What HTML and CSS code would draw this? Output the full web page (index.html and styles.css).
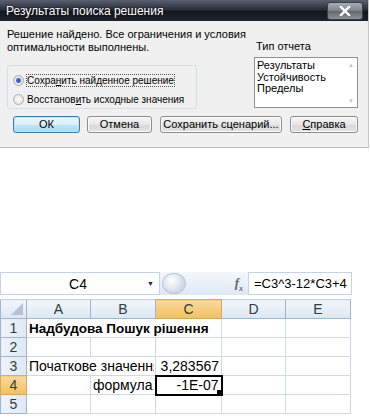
FILE: index.html
```html
<!DOCTYPE html>
<html lang="ru">

<head>
    <meta charset="UTF-8">
    <title>Результаты поиска решения</title>
    <link rel="stylesheet" href="styles.css">
</head>

<body>
    <div class="dialog">
        <div class="titlebar">
            <span class="title">Результаты поиска решения</span>
            <div class="close">
                <svg width="12" height="10" viewBox="0 0 12 10">
                    <path d="M2 1 L10 9 M10 1 L2 9" stroke="#fff" stroke-width="2.4" stroke-linecap="square" />
                </svg>
            </div>
        </div>
        <div class="dlg-body">
            <div class="top">
                <div class="left">
                    <p class="msg">Решение найдено. Все ограничения и условия оптимальности выполнены.</p>
                    <div class="group">
                        <label class="radio"><span class="dot on"></span><span class="focus">Сохра<u>н</u>ить найденное решение</span></label>
                        <label class="radio"><span class="dot"></span><span>Восстанов<u>и</u>ть исходные значения</span></label>
                    </div>
                </div>
                <div class="right">
                    <div class="lbl">Тип отчета</div>
                    <div class="listbox">
                        <div class="items">
                            <div>Результаты</div>
                            <div>Устойчивость</div>
                            <div>Пределы</div>
                        </div>
                        <div class="scroll">
                            <span class="arr">&#9650;</span>
                            <span class="arr">&#9660;</span>
                        </div>
                    </div>
                </div>
            </div>
            <div class="buttons">
                <div class="btn default ok">ОК</div>
                <div class="btn cancel">Отмена</div>
                <div class="btn save">Сохранить сценарий...</div>
                <div class="btn help"><u>С</u>правка</div>
            </div>
        </div>
    </div>

    <div class="excel">
        <div class="fbar">
            <div class="namebox">
                <span class="name">C4</span>
                <span class="drop">&#9660;</span>
            </div>
            <div class="mid">
                <span class="knob"></span>
                <span class="fx">f<sub>x</sub></span>
            </div>
            <div class="formula">=C3^3-12*C3+4</div>
        </div>
        <table class="sheet">
            <tr class="hdr">
                <th class="corner"><span class="tri"></span></th>
                <th>A</th>
                <th>B</th>
                <th class="sel">C</th>
                <th>D</th>
                <th>E</th>
            </tr>
            <tr>
                <th>1</th>
                <td class="bold" colspan="3">Надбудова Пошук рішення</td>
                <td></td>
                <td></td>
            </tr>
            <tr>
                <th>2</th>
                <td></td><td></td><td></td><td></td><td></td>
            </tr>
            <tr>
                <th>3</th>
                <td colspan="2"><div class="clip">Початкове значення</div></td>
                <td class="num">3,283567</td>
                <td></td>
                <td></td>
            </tr>
            <tr>
                <th class="sel">4</th>
                <td></td>
                <td class="num">формула</td>
                <td class="num active">-1E-07<span class="handle"></span></td>
                <td></td>
                <td></td>
            </tr>
            <tr>
                <th>5</th>
                <td></td><td></td><td></td><td></td><td></td>
            </tr>
        </table>
    </div>
</body>

</html>
```

FILE: styles.css
```css
body {
    margin: 0;
    background: #fff;
    font-family: "Liberation Sans", Arial, sans-serif;
}

/* диалог */
.dialog {
    width: 368px;
    height: 147px;
    background: #f0f0f0;
    border-bottom: 1px solid #b8b8b8;
    border-right: 1px solid #c8c8c8;
}

.titlebar {
    height: 21px;
    display: flex;
    align-items: center;
    justify-content: space-between;
    background: linear-gradient(#5a6070, #2a2f3c 45%, #14171f 55%, #1e222c);
}

.title {
    color: #fff;
    font-size: 12px;
    padding-left: 6px;
    text-shadow: 0 0 2px #000;
}

.close {
    width: 34px;
    height: 16px;
    margin-right: 5px;
    display: flex;
    align-items: center;
    justify-content: center;
    border: 1px solid #3a3e48;
    border-radius: 3px;
    background: linear-gradient(#a8acb4, #7c818c 50%, #62666f 51%, #8a8f98);
}

.dlg-body {
    padding: 6px 10px 0 7px;
    font-size: 11px;
    color: #000;
}

.top {
    display: flex;
    justify-content: space-between;
}

.left {
    width: 244px;
}

.msg {
    margin: 0;
    line-height: 13px;
    padding-top: 1px;
}

.group {
    margin-top: 11px;
    width: 190px;
    height: 44px;
    border: 1px solid #d5dfe5;
    border-radius: 3px;
    padding: 5px 0 0 5px;
    box-sizing: border-box;
}

.radio {
    display: flex;
    align-items: center;
    height: 19px;
    font-size: 10px;
    white-space: nowrap;
}

.dot {
    width: 11px;
    height: 11px;
    border-radius: 50%;
    border: 1px solid #a8b0b8;
    background: radial-gradient(#fff, #dcdcdc);
    box-sizing: border-box;
    margin-right: 3px;
    flex: none;
}

.dot.on {
    background: radial-gradient(circle, #3b57c0 0, #4866d2 2px, #e8eaf6 3px, #d8dce6 5px);
}

.focus {
    outline: 1px dotted #555;
    outline-offset: 0;
}

.right {
    width: 104px;
    padding-top: 13px;
}

.lbl {
    height: 14px;
    padding-left: 2px;
}

.listbox {
    margin-top: 3px;
    height: 51px;
    border: 1px solid #8c9196;
    background: #fff;
    display: flex;
    box-sizing: border-box;
}

.items {
    flex: 1;
    padding: 2px 0 0 2px;
    line-height: 11.5px;
}

.scroll {
    width: 12px;
    display: flex;
    flex-direction: column;
    justify-content: space-between;
    align-items: center;
    color: #c0c4c8;
    font-size: 6px;
    padding: 4px 0 3px;
}

.buttons {
    display: flex;
    margin-top: 7px;
    padding-left: 6px;
}

.btn {
    height: 17px;
    line-height: 15px;
    text-align: center;
    border: 1px solid #8d8d8d;
    border-radius: 3px;
    box-sizing: border-box;
    background: linear-gradient(#f6f6f6, #e6e6e6 50%, #d8d8d8 51%, #e2e2e2);
    box-shadow: inset 0 0 0 1px #fbfbfb;
}

.btn.default {
    border-color: #3d7bad;
    background: linear-gradient(#eaf6fd, #d9f0fc 50%, #bee6fd 51%, #a7d9f5);
    box-shadow: inset 0 0 0 1px #c4e5f6;
}

.ok {
    width: 67px;
}

.cancel {
    width: 65px;
    margin-left: 7px;
}

.save {
    width: 122px;
    margin-left: 8px;
}

.help {
    width: 68px;
    margin-left: 8px;
}

/* лист Excel */
.excel {
    margin-top: 124px;
    font-family: "Liberation Sans", Arial, sans-serif;
}

.fbar {
    display: flex;
    height: 23px;
    width: 352px;
    background: linear-gradient(#f4f8fd, #dde7f4);
}

.namebox {
    width: 160px;
    border: 1px solid #c4d3e6;
    background: #fff;
    display: flex;
    align-items: center;
    box-sizing: border-box;
    font-size: 14px;
}

.name {
    flex: 1;
    text-align: center;
    padding-left: 8px;
}

.drop {
    font-size: 7px;
    margin-right: 5px;
    color: #222;
}

.mid {
    width: 88px;
    display: flex;
    align-items: center;
    justify-content: space-between;
    padding: 0 5px 0 0;
    box-sizing: border-box;
}

.knob {
    width: 22px;
    height: 19px;
    border-radius: 50%;
    margin-left: 2px;
    background: radial-gradient(circle at 40% 35%, #ffffff, #dfe7f1 45%, #b7c6d9);
    border: 1px solid #b8c6d8;
}

.fx {
    font-family: "Liberation Serif", serif;
    font-style: italic;
    font-weight: bold;
    font-size: 13px;
    color: #666;
}

.fx sub {
    font-size: 8px;
}

.formula {
    flex: 1;
    background: #fff;
    border: 1px solid #c4d3e6;
    font-size: 13px;
    line-height: 21px;
    padding-left: 5px;
    white-space: nowrap;
    overflow: hidden;
}

.sheet {
    margin-top: 4px;
    border-collapse: collapse;
    table-layout: fixed;
    width: 350px;
    font-size: 14px;
}

.sheet th,
.sheet td {
    height: 19px;
    padding: 0 2px;
    box-sizing: border-box;
    white-space: nowrap;
    overflow: hidden;
}

.sheet th {
    font-weight: normal;
    color: #27413e;
    background: linear-gradient(#f2f6fb, #dde6f2);
    border: 1px solid #9eb6ce;
    border-top-color: #c5d3e3;
}

.sheet tr:not(.hdr) th {
    width: 26px;
    background: linear-gradient(90deg, #eef3fa, #dfe8f4);
}

.sheet th.sel,
.sheet tr:not(.hdr) th.sel {
    background: linear-gradient(#f9d99f, #f1c15f);
    border-color: #d7a95a;
}

.hdr th:nth-child(1) { width: 26px; }
.hdr th:nth-child(2) { width: 64px; }
.hdr th:nth-child(3) { width: 65px; }
.hdr th:nth-child(4) { width: 66px; }
.hdr th:nth-child(5) { width: 64px; }
.hdr th:nth-child(6) { width: 65px; }

.corner {
    position: relative;
}

.tri {
    position: absolute;
    right: 3px;
    bottom: 3px;
    border-left: 12px solid transparent;
    border-bottom: 12px solid #b3c4d9;
}

.sheet td {
    border: 1px solid #d0d7e5;
    color: #000;
}

.bold {
    font-weight: bold;
    font-size: 13.5px;
}

.clip {
    width: 125px;
    overflow: hidden;
}

.num {
    text-align: right;
}

.active {
    position: relative;
    border: 2px solid #000 !important;
}

.handle {
    position: absolute;
    right: -2px;
    bottom: -2px;
    width: 5px;
    height: 5px;
    background: #000;
    border: 1px solid #fff;
}
```
